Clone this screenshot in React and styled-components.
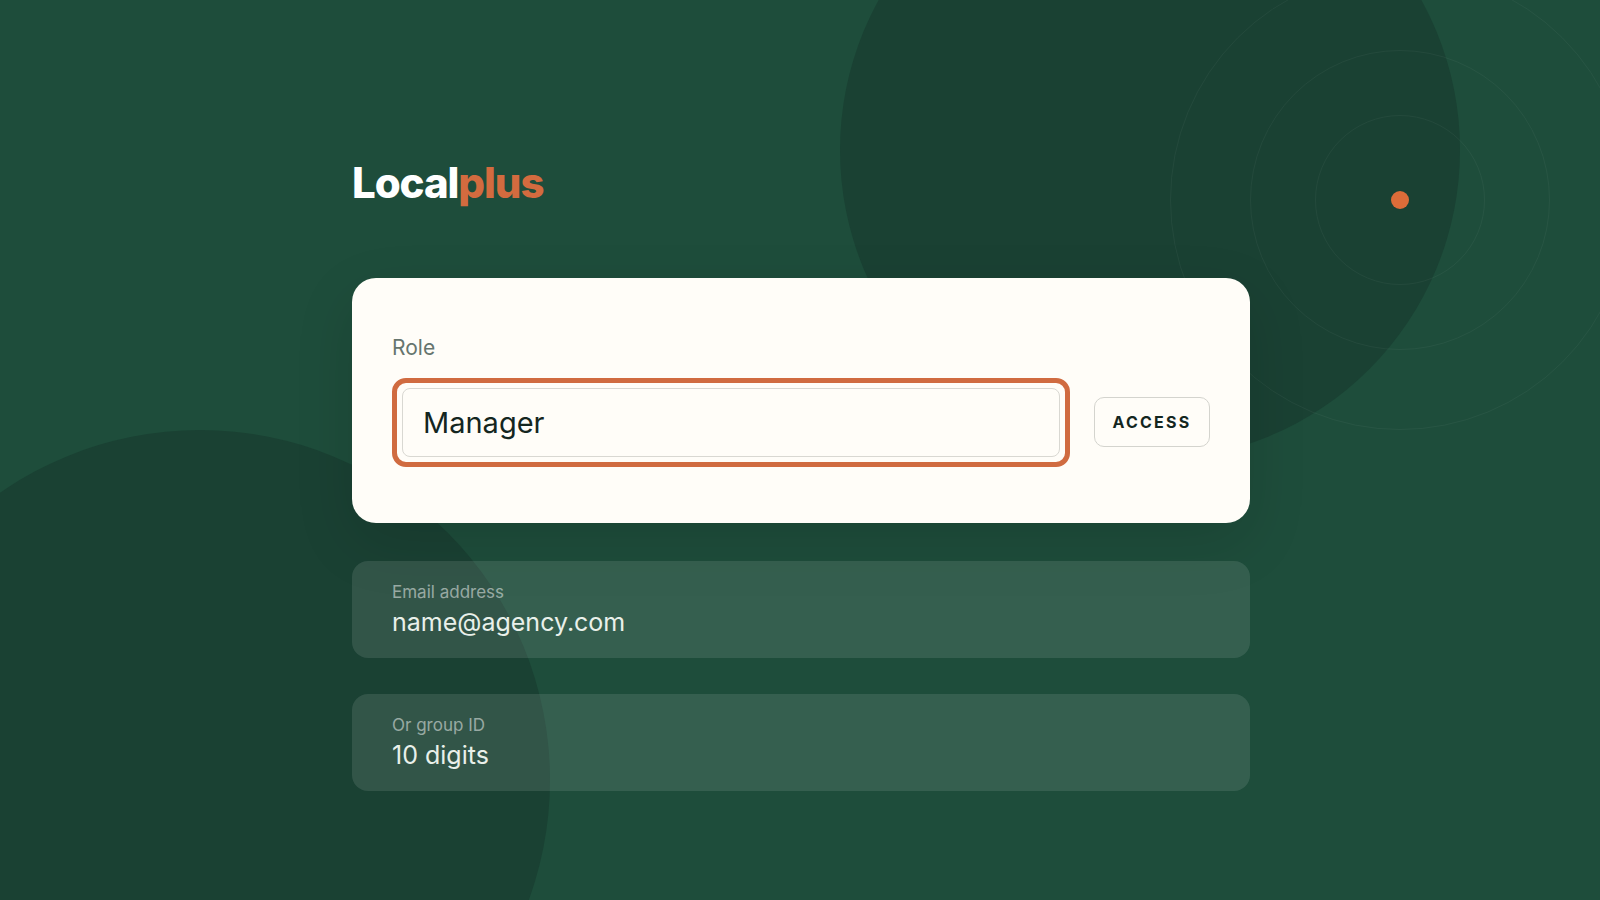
import React from 'react'
import styled, { createGlobalStyle } from 'styled-components'

const GlobalStyle = createGlobalStyle`
  html, body {
    margin: 0;
    height: 100%;
    background: #1e4d3b;
    font-family: Inter, "Noto Sans", sans-serif;
  }
`

const Page = styled.div`
  position: relative;
  width: 1600px;
  height: 900px;
  overflow: hidden;
  background: #1e4d3b;
`

const Blob = styled.div`
  position: absolute;
  left: ${p => p.$x - p.$r}px;
  top: ${p => p.$y - p.$r}px;
  width: ${p => p.$r * 2}px;
  height: ${p => p.$r * 2}px;
  border-radius: 50%;
  background: #1a4133;
`

const Radar = styled.div`
  position: absolute;
  left: 1170px;
  top: -30px;
  width: 460px;
  height: 460px;
  display: grid;
  place-items: center;

  > * {
    grid-area: 1 / 1;
  }
`

const Ring = styled.div`
  width: ${p => p.$size}px;
  height: ${p => p.$size}px;
  box-sizing: border-box;
  border-radius: 50%;
  border: 1px solid rgba(255, 255, 255, 0.045);
`

const Dot = styled.div`
  width: 18px;
  height: 18px;
  border-radius: 50%;
  background: #dc6c39;
`

const Content = styled.main`
  position: relative;
  width: 898px;
  margin-left: 352px;
  padding-top: 158px;
  display: flex;
  flex-direction: column;
`

const Logo = styled.div`
  font-size: 42px;
  line-height: 50px;
  font-weight: 800;
  letter-spacing: -0.026em;
  color: #ffffff;
  margin-bottom: 70px;

  span {
    color: #d36b3f;
  }
`

const Card = styled.section`
  box-sizing: border-box;
  height: 245px;
  padding: 58px 40px 0;
  border-radius: 24px;
  background: #fffdf8;
  box-shadow: 0 20px 60px rgba(0, 0, 0, 0.12);
  margin-bottom: 38px;
`

const RoleLabel = styled.div`
  font-size: 21px;
  line-height: 24px;
  color: #66756e;
  margin-bottom: 18px;
`

const Row = styled.div`
  display: flex;
  align-items: center;
  justify-content: space-between;
`

const FocusRing = styled.div`
  box-sizing: border-box;
  width: 678px;
  height: 89px;
  padding: 5px;
  border: 5px solid #d06b40;
  border-radius: 14px;
`

const Field = styled.div`
  box-sizing: border-box;
  height: 100%;
  padding-left: 20px;
  display: flex;
  align-items: center;
  border: 1px solid #d9d8d2;
  border-radius: 8px;
  font-size: 29px;
  color: #14261f;
`

const AccessButton = styled.button`
  box-sizing: border-box;
  width: 116px;
  height: 50px;
  padding: 0;
  margin-bottom: 2px;
  background: transparent;
  border: 1px solid #d4d4ce;
  border-radius: 10px;
  font-family: inherit;
  font-size: 16px;
  font-weight: 650;
  letter-spacing: 2.2px;
  color: #14261f;
`

const Panel = styled.div`
  box-sizing: border-box;
  height: 97px;
  padding: 21px 40px 0;
  margin-bottom: 36px;
  border-radius: 16px;
  background: rgba(255, 255, 255, 0.105);
`

const PanelLabel = styled.div`
  font-size: 17px;
  line-height: 20px;
  color: rgba(255, 255, 255, 0.5);
`

const PanelValue = styled.div`
  font-size: 25px;
  line-height: 32px;
  margin-top: 4px;
  color: #e9f0ea;
`

const App = () => {
  return (
    <Page>
      <GlobalStyle />
      <Blob $x={1150} $y={150} $r={310} />
      <Blob $x={200} $y={780} $r={350} />
      <Radar>
        <Ring $size={460} />
        <Ring $size={300} />
        <Ring $size={170} />
        <Dot />
      </Radar>
      <Content>
        <Logo>Local<span>plus</span></Logo>
        <Card>
          <RoleLabel>Role</RoleLabel>
          <Row>
            <FocusRing>
              <Field>Manager</Field>
            </FocusRing>
            <AccessButton>ACCESS</AccessButton>
          </Row>
        </Card>
        <Panel>
          <PanelLabel>Email address</PanelLabel>
          <PanelValue>name@agency.com</PanelValue>
        </Panel>
        <Panel>
          <PanelLabel>Or group ID</PanelLabel>
          <PanelValue>10 digits</PanelValue>
        </Panel>
      </Content>
    </Page>
  )
}

export default App
